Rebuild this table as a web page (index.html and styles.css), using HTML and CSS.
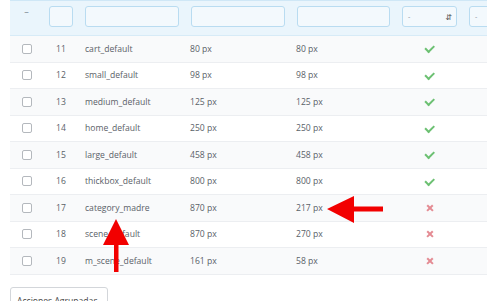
FILE: index.html
```html
<!DOCTYPE html>
<html>
<head>
<meta charset="utf-8">
<link rel="stylesheet" href="styles.css">
</head>
<body>
<div class="page">
  <div class="table">
    <div class="row head">
      <div class="cell c-center dash">–</div>
      <div class="cell"><div class="inp"></div></div>
      <div class="cell"><div class="inp"></div></div>
      <div class="cell"><div class="inp"></div></div>
      <div class="cell"><div class="inp"></div></div>
      <div class="cell"><div class="sel"><span>-</span><span class="arr">&#8693;</span></div></div>
      <div class="cell"><div class="sel"><span>-</span></div></div>
    </div>
    <div class="row odd"><div class="cell c-center"><span class="cb"></span></div><div class="cell c-center">11</div><div class="cell">cart_default</div><div class="cell">80 px</div><div class="cell">80 px</div><div class="cell c-center"><span class="ok"></span></div><div class="cell"></div></div>
    <div class="row"><div class="cell c-center"><span class="cb"></span></div><div class="cell c-center">12</div><div class="cell">small_default</div><div class="cell">98 px</div><div class="cell">98 px</div><div class="cell c-center"><span class="ok"></span></div><div class="cell"></div></div>
    <div class="row odd"><div class="cell c-center"><span class="cb"></span></div><div class="cell c-center">13</div><div class="cell">medium_default</div><div class="cell">125 px</div><div class="cell">125 px</div><div class="cell c-center"><span class="ok"></span></div><div class="cell"></div></div>
    <div class="row"><div class="cell c-center"><span class="cb"></span></div><div class="cell c-center">14</div><div class="cell">home_default</div><div class="cell">250 px</div><div class="cell">250 px</div><div class="cell c-center"><span class="ok"></span></div><div class="cell"></div></div>
    <div class="row odd"><div class="cell c-center"><span class="cb"></span></div><div class="cell c-center">15</div><div class="cell">large_default</div><div class="cell">458 px</div><div class="cell">458 px</div><div class="cell c-center"><span class="ok"></span></div><div class="cell"></div></div>
    <div class="row"><div class="cell c-center"><span class="cb"></span></div><div class="cell c-center">16</div><div class="cell">thickbox_default</div><div class="cell">800 px</div><div class="cell">800 px</div><div class="cell c-center"><span class="ok"></span></div><div class="cell"></div></div>
    <div class="row odd"><div class="cell c-center"><span class="cb"></span></div><div class="cell c-center">17</div><div class="cell">category_madre</div><div class="cell">870 px</div><div class="cell">217 px</div><div class="cell c-center"><span class="no"></span></div><div class="cell"></div></div>
    <div class="row"><div class="cell c-center"><span class="cb"></span></div><div class="cell c-center">18</div><div class="cell">scene_default</div><div class="cell">870 px</div><div class="cell">270 px</div><div class="cell c-center"><span class="no"></span></div><div class="cell"></div></div>
    <div class="row odd"><div class="cell c-center"><span class="cb"></span></div><div class="cell c-center">19</div><div class="cell">m_scene_default</div><div class="cell">161 px</div><div class="cell">58 px</div><div class="cell c-center"><span class="no"></span></div><div class="cell"></div></div>
  </div>
  <div class="actions"><span class="btn">Acciones Agrupadas <span class="caret">&#9662;</span></span></div>

  <svg class="arrow-up" width="30" height="56" viewBox="0 0 30 56">
    <polygon points="15,0 28,26 17.5,26 17.5,53 13,53 13,26 2,26" fill="#f20000"/>
  </svg>
  <svg class="arrow-left" width="60" height="30" viewBox="0 0 60 30">
    <polygon points="0,14 27,1 27,11.5 56,11.5 56,16.5 27,16.5 27,28" fill="#f20000"/>
  </svg>
</div>
</body>
</html>
```
FILE: styles.css
```css
html, body {
  margin: 0;
  padding: 0;
  background: #ffffff;
  overflow: hidden;
}
.page {
  position: relative;
  width: 487px;
  height: 301px;
  overflow: hidden;
  font-family: "Open Sans", "DejaVu Sans", sans-serif;
  font-size: 8.6px;
  color: #5a6168;
}
.table {
  margin-left: 10px;
  width: 560px;
}
.row {
  display: grid;
  grid-template-columns: 33px 36px 106px 106px 105px 67px 107px;
  height: 26.5px;
  border-bottom: 1px solid #eceef1;
  box-sizing: border-box;
  background: #ffffff;
}
.row.odd { background: #f9fafb; }
.row.head {
  height: 36px;
  background: #eaf5fc;
  border-top: 1px solid #cfe7f6;
  border-bottom: 1px solid #d7ebf7;
}
.cell {
  display: flex;
  align-items: center;
  padding: 0 5px;
  box-sizing: border-box;
  white-space: nowrap;
  overflow: hidden;
}
.row .cell:nth-child(3) { padding-left: 6px; }
.c-center { justify-content: center; padding: 0; }
.head .cell { align-items: flex-start; padding: 5px 6px 0 6px; }
.head .dash { padding-top: 4px; color: #7a8692; font-size: 9px; }
.inp {
  width: 100%;
  height: 21px;
  box-sizing: border-box;
  background: #f3f9fd;
  border: 1px solid #b9dcf1;
  border-radius: 3px;
}
.sel {
  width: 100%;
  height: 21px;
  box-sizing: border-box;
  background: #f3f9fd;
  border: 1px solid #b9dcf1;
  border-radius: 3px;
  display: flex;
  align-items: center;
  justify-content: space-between;
  padding: 0 4px 0 5px;
  color: #8a949c;
  font-size: 7px;
}
.sel .arr { color: #555; font-size: 8px; }
.cb {
  width: 8px;
  height: 8px;
  border: 1px solid #b4b8bd;
  border-radius: 2px;
  background: #fff;
}
.ok {
  width: 7px;
  height: 3.5px;
  border-left: 2.2px solid #6cc072;
  border-bottom: 2.2px solid #6cc072;
  transform: rotate(-45deg);
  margin-top: -2px;
}
.no {
  position: relative;
  width: 7px;
  height: 7px;
}
.no::before, .no::after {
  content: "";
  position: absolute;
  left: -0.5px;
  top: 2.5px;
  width: 8px;
  height: 2.2px;
  background: #e48b93;
  transform: rotate(45deg);
}
.no::after { transform: rotate(-45deg); }
.actions {
  margin: 12px 0 0 10px;
}
.btn {
  display: inline-block;
  width: 98px;
  height: 22px;
  box-sizing: border-box;
  border: 1px solid #d3d6da;
  border-radius: 3px;
  padding: 7px 0 0 6px;
  font-size: 8.6px;
  color: #444;
  background: #fff;
}
.caret { font-size: 6px; margin-left: 3px; color: #555; }
.arrow-up {
  position: absolute;
  left: 101px;
  top: 219px;
}
.arrow-left {
  position: absolute;
  left: 327px;
  top: 195px;
}
```
